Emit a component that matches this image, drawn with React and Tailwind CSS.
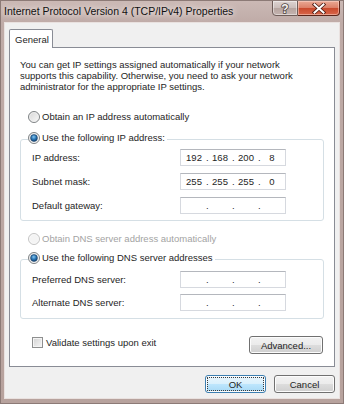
import React, { Fragment } from "react";

const BODY = "font-['Liberation_Sans',Arial,sans-serif] text-[9.5px] leading-[11px] text-[#1e1e1e]";

function Radio({ checked = false, disabled = false }) {
  return (
    <svg width="12" height="12" viewBox="0 0 12 12" className="shrink-0">
      <defs>
        <linearGradient id="rfill" x1="0" y1="0" x2="1" y2="1">
          <stop offset="0" stopColor="#d4d4d4" />
          <stop offset="1" stopColor="#fbfbfb" />
        </linearGradient>
        <radialGradient id="rdot" cx="0.45" cy="0.35" r="0.7">
          <stop offset="0" stopColor="#86c6f0" />
          <stop offset="0.5" stopColor="#2a76b4" />
          <stop offset="1" stopColor="#0b3b6b" />
        </radialGradient>
      </defs>
      <circle cx="6" cy="6" r="5.5" fill={disabled ? "#f4f4f4" : "url(#rfill)"} stroke={disabled ? "#c4c4c4" : "#7f8385"} strokeWidth="1" />
      <circle cx="6" cy="6" r="4.3" fill="none" stroke={disabled ? "#f8f8f8" : "#eeeeee"} strokeWidth="0.8" />
      {checked && <circle cx="6" cy="6" r="3.4" fill="url(#rdot)" stroke="#1c3f66" strokeWidth="0.6" />}
    </svg>
  );
}

function IpBox({ parts = ["", "", "", ""] }) {
  return (
    <div className="flex h-[17px] w-[106px] shrink-0 items-center border border-[#d6d9df] border-t-[#b4b7bd] bg-white px-px">
      {parts.map((p, i) => (
        <Fragment key={i}>
          {i > 0 && <span className="w-[2px] text-center">.</span>}
          <span className="flex-1 text-center">{p}</span>
        </Fragment>
      ))}
    </div>
  );
}

function Row({ label, parts }) {
  return (
    <div className="flex h-[17px] items-center pl-[4px]">
      <span className="w-[148px] shrink-0">{label}</span>
      <IpBox parts={parts} />
    </div>
  );
}

function Button({ children, primary = false, className = "" }) {
  return (
    <div
      className={
        "flex h-[18px] items-center justify-center rounded-[3px] border shadow-[inset_0_0_0_1px_#fcfcfc] " +
        (primary
          ? "border-[#3c7fb1] bg-[linear-gradient(to_bottom,#eaf6fd_0%,#d9f0fc_50%,#bee6fd_50%,#a7d9f5_100%)] [outline:1px_dotted_#3a3a3a] [outline-offset:-3px] "
          : "border-[#707070] bg-[linear-gradient(to_bottom,#f2f2f2_0%,#ebebeb_50%,#dddddd_50%,#cfcfcf_100%)] ") +
        className
      }
    >
      {children}
    </div>
  );
}

export default function App() {
  return (
    <div className="flex h-[404px] w-[344px] flex-col overflow-hidden border border-[#8c7a76] bg-[linear-gradient(to_bottom,#cbb9b5_0px,#bfaba7_22px,#b7a29d_100%)]">
      {/* Title bar */}
      <div className="flex h-[21px] shrink-0 items-start">
        <div className="flex-1 pl-[3px] pt-[3px] font-['Liberation_Sans',Arial,sans-serif] text-[10.5px] leading-[15px] text-[#111] [text-shadow:0_0_5px_#f4ecea,0_0_8px_#f4ecea]">
          Internet Protocol Version 4 (TCP/IPv4) Properties
        </div>
        <div className="-mt-px flex h-[16px] items-stretch pr-[3px]">
          <div className="flex w-[26px] items-center justify-center rounded-bl-[4px] border border-[#6e5c58] bg-[linear-gradient(to_bottom,#ddd3d1_0%,#cbbdba_50%,#b6a49f_50%,#c4b3af_100%)] shadow-[inset_0_0_0_1px_rgba(255,255,255,0.45)]">
            <svg width="12" height="13" viewBox="0 0 12 13">
              <text x="6" y="11" textAnchor="middle" fontFamily="Liberation Sans, Arial, sans-serif" fontWeight="bold" fontSize="12" fill="#f6f2f1" stroke="#4f4442" strokeWidth="1.6" paintOrder="stroke">?</text>
            </svg>
          </div>
          <div className="flex w-[42px] items-center justify-center rounded-br-[4px] border border-l-0 border-[#5b2418] bg-[linear-gradient(to_bottom,#e9a995_0%,#dc8068_48%,#c94a2d_52%,#d8664a_100%)] shadow-[inset_0_0_0_1px_rgba(255,220,210,0.5)]">
            <svg width="14" height="11" viewBox="0 0 14 11">
              <path d="M2.5 1.5 L11.5 9.5 M11.5 1.5 L2.5 9.5" stroke="#4a1a12" strokeWidth="3.6" strokeLinecap="square" fill="none" />
              <path d="M2.5 1.5 L11.5 9.5 M11.5 1.5 L2.5 9.5" stroke="#ffffff" strokeWidth="2" strokeLinecap="square" fill="none" />
            </svg>
          </div>
        </div>
      </div>

      {/* Client area */}
      <div className={"mx-[3px] flex flex-1 flex-col border border-[#e9e1df] bg-[#f0f0f0] px-[4px] pt-[6px] " + BODY}>
        {/* Tab */}
        <div className="relative z-10 -mb-px flex h-[19px] w-[44px] items-center rounded-t-[2px] border border-b-0 border-[#898c95] bg-white pl-[5px]">
          General
        </div>
        {/* Panel */}
        <div className="flex h-[320px] flex-col border border-[#898c95] bg-white px-[10px] pt-[11px]">
          <p>
            You can get IP settings assigned automatically if your network
            <br />
            supports this capability. Otherwise, you need to ask your network
            <br />
            administrator for the appropriate IP settings.
          </p>

          <div className="ml-[8px] mt-[18px] flex h-[13px] items-center gap-[2px]">
            <Radio />
            <span>Obtain an IP address automatically</span>
          </div>

          <fieldset className="mt-[8px] rounded-[3px] border border-[#d5dfe5] pb-[6px] pl-[7px] pr-[6px]">
            <legend className="flex h-[17px] items-start gap-[2px] pr-[2px]">
              <span className="flex h-[13px] items-center gap-[2px]">
                <Radio checked />
                <span>Use the following IP address:</span>
              </span>
            </legend>
            <div className="mt-px flex flex-col gap-[7px]">
              <Row label="IP address:" parts={["192", "168", "200", "8"]} />
              <Row label="Subnet mask:" parts={["255", "255", "255", "0"]} />
              <Row label="Default gateway:" />
            </div>
          </fieldset>

          <div className="ml-[8px] mt-[11px] flex h-[13px] items-center gap-[2px] text-[#a3a3a3]">
            <Radio disabled />
            <span>Obtain DNS server address automatically</span>
          </div>

          <fieldset className="mt-[6px] rounded-[3px] border border-[#d5dfe5] pb-[7px] pl-[7px] pr-[6px]">
            <legend className="flex h-[17px] items-start gap-[2px] pr-[2px]">
              <span className="flex h-[13px] items-center gap-[2px]">
                <Radio checked />
                <span>Use the following DNS server addresses</span>
              </span>
            </legend>
            <div className="mt-[3px] flex flex-col gap-[6px]">
              <Row label="Preferred DNS server:" />
              <Row label="Alternate DNS server:" />
            </div>
          </fieldset>

          <div className="mt-[17px] flex items-start justify-between pl-[12px] pr-px">
            <div className="flex h-[12px] items-center gap-[3px]">
              <div className="h-[11px] w-[11px] border border-[#8e8f8f] bg-[linear-gradient(135deg,#d2d2d2,#f6f6f6)] shadow-[inset_0_0_0_1px_#f4f4f4]" />
              <span>Validate settings upon exit</span>
            </div>
            <Button className="w-[74px]">Advanced...</Button>
          </div>
        </div>

        {/* Bottom buttons */}
        <div className="mt-[8px] flex justify-end gap-[8px]">
          <Button primary className="w-[61px]">OK</Button>
          <Button className="w-[61px]">Cancel</Button>
        </div>
      </div>
      <div className="h-[4px] shrink-0" />
    </div>
  );
}
